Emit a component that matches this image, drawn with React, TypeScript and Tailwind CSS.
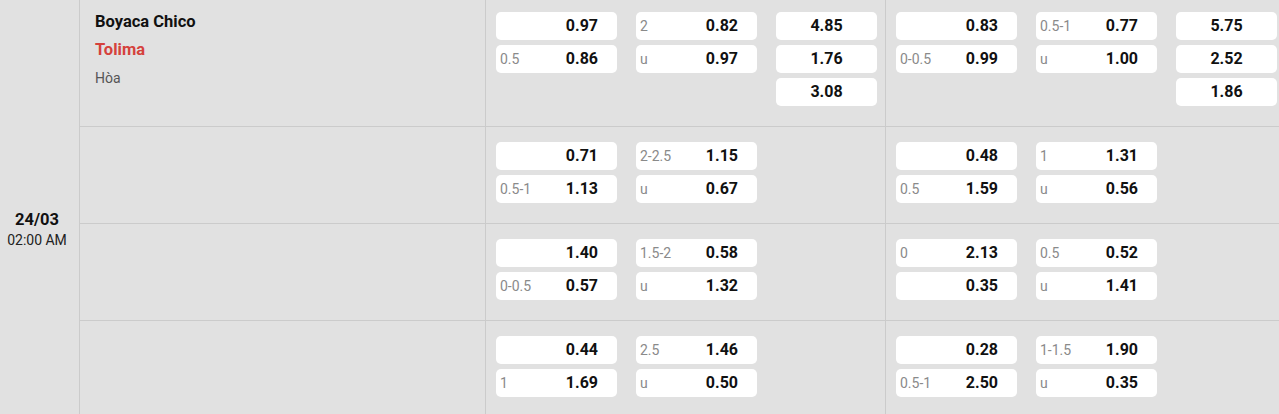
type Odd = [string, string];

interface Market {
  handicap: [Odd, Odd];
  overUnder: [Odd, Odd];
  x12?: [string, string, string];
}

interface Line {
  full: Market;
  half: Market;
}

const lines: Line[] = [
  {
    full: {
      handicap: [['', '0.97'], ['0.5', '0.86']],
      overUnder: [['2', '0.82'], ['u', '0.97']],
      x12: ['4.85', '1.76', '3.08'],
    },
    half: {
      handicap: [['', '0.83'], ['0-0.5', '0.99']],
      overUnder: [['0.5-1', '0.77'], ['u', '1.00']],
      x12: ['5.75', '2.52', '1.86'],
    },
  },
  {
    full: {
      handicap: [['', '0.71'], ['0.5-1', '1.13']],
      overUnder: [['2-2.5', '1.15'], ['u', '0.67']],
    },
    half: {
      handicap: [['', '0.48'], ['0.5', '1.59']],
      overUnder: [['1', '1.31'], ['u', '0.56']],
    },
  },
  {
    full: {
      handicap: [['', '1.40'], ['0-0.5', '0.57']],
      overUnder: [['1.5-2', '0.58'], ['u', '1.32']],
    },
    half: {
      handicap: [['0', '2.13'], ['', '0.35']],
      overUnder: [['0.5', '0.52'], ['u', '1.41']],
    },
  },
  {
    full: {
      handicap: [['', '0.44'], ['1', '1.69']],
      overUnder: [['2.5', '1.46'], ['u', '0.50']],
    },
    half: {
      handicap: [['', '0.28'], ['0.5-1', '2.50']],
      overUnder: [['1-1.5', '1.90'], ['u', '0.35']],
    },
  },
];

function OddBox({ odd }: { odd: Odd }) {
  return (
    <div className="h-[28px] mb-[5px] bg-white rounded-[5px] flex items-center justify-between pl-[4px] pr-[19px]">
      <span className="text-[14px] text-[#8a8a8a]">{odd[0]}</span>
      <span className="text-[16px] font-bold text-[#111]">{odd[1]}</span>
    </div>
  );
}

function MarketCell({ market, last }: { market: Market; last?: boolean }) {
  return (
    <div
      className={`${last ? 'flex-1' : 'w-[400px] border-r border-[#cbcbcb]'} flex gap-[19px] pl-[10px] py-[15px]`}
    >
      <div className="w-[121px]">
        {market.handicap.map((o, i) => (
          <OddBox key={i} odd={o} />
        ))}
      </div>
      <div className="w-[121px]">
        {market.overUnder.map((o, i) => (
          <OddBox key={i} odd={o} />
        ))}
      </div>
      {market.x12 && (
        <div className="w-[101px]">
          {market.x12.map((v, i) => (
            <div
              key={i}
              className="h-[28px] mb-[5px] bg-white rounded-[5px] flex items-center justify-center text-[16px] font-bold text-[#111]"
            >
              {v}
            </div>
          ))}
        </div>
      )}
    </div>
  );
}

export default function App() {
  return (
    <div
      className="w-[1279px] h-[414px] overflow-hidden bg-[#e1e1e1]"
      style={{ fontFamily: 'Roboto, "Liberation Sans", sans-serif' }}
    >
      <div className="flex mt-[-3px]">
        <div className="w-[80px] shrink-0 border-r border-[#cbcbcb] flex flex-col items-center justify-center pt-[44px] pr-[5px]">
          <div className="text-[16.5px] leading-[20px] font-bold text-[#111]">24/03</div>
          <div className="text-[14px] leading-[20px] text-[#222]">02:00 AM</div>
        </div>
        <div className="flex-1 flex flex-col">
          {lines.map((line, idx) => (
            <div key={idx} className="flex border-b border-[#cbcbcb]">
              <div className="w-[406px] border-r border-[#cbcbcb] pl-[15px] pt-[11px]">
                {idx === 0 && (
                  <div className="leading-[28px]">
                    <div className="text-[16.5px] font-bold text-[#111]">Boyaca Chico</div>
                    <div className="text-[16.5px] font-bold text-[#d5413c]">Tolima</div>
                    <div className="text-[14px] text-[#555]">Hòa</div>
                  </div>
                )}
              </div>
              <MarketCell market={line.full} />
              <MarketCell market={line.half} last />
            </div>
          ))}
        </div>
      </div>
    </div>
  );
}
